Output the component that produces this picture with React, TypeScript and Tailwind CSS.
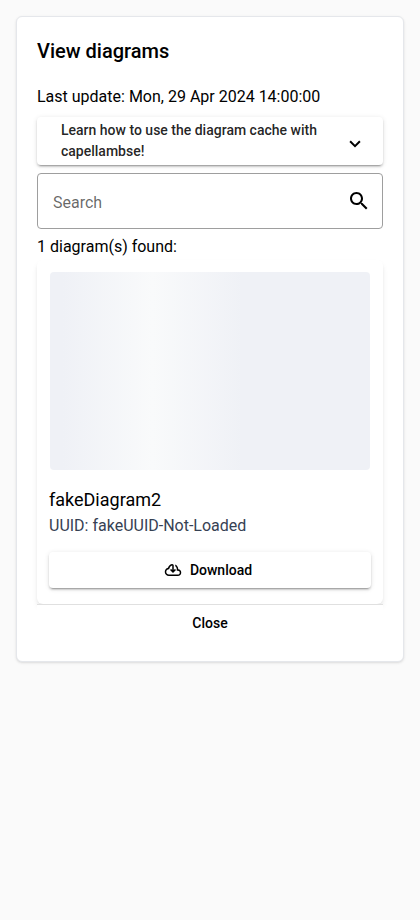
const raised =
  "shadow-[0_3px_1px_-2px_rgba(0,0,0,0.2),0_2px_2px_0_rgba(0,0,0,0.14),0_1px_5px_0_rgba(0,0,0,0.12)]";

function SearchIcon() {
  return (
    <svg className="size-6 shrink-0" viewBox="0 0 24 24" fill="currentColor" aria-hidden="true">
      <path d="M15.5 14h-.79l-.28-.27C15.41 12.59 16 11.11 16 9.5 16 5.91 13.09 3 9.5 3S3 5.91 3 9.5 5.91 16 9.5 16c1.61 0 3.09-.59 4.23-1.57l.27.28v.79l5 4.99L20.49 19l-4.99-5zm-6 0C7.01 14 5 11.99 5 9.5S7.01 5 9.5 5 14 7.01 14 9.5 11.99 14 9.5 14z" />
    </svg>
  );
}

function CloudDownloadIcon() {
  return (
    <svg className="size-[18px] shrink-0" viewBox="0 -960 960 960" fill="currentColor" aria-hidden="true">
      <path d="M260-160q-91 0-155.500-63T40-377q0-78 47-139t123-78q17-72 85-137t145-65q33 0 56.500 23.500T520-716v242l64-62 56 56-160 160-160-160 56-56 64 62v-242q-76 14-118 73.500T280-520h-20q-58 0-99 41t-41 99q0 58 41 99t99 41h480q42 0 71-29t29-71q0-42-29-71t-71-29h-60v-80q0-48-22-89.500T600-680v-93q74 35 117 103.500T760-520q69 8 114.500 59.500T920-340q0 75-52.500 127.500T740-160H260Z" />
    </svg>
  );
}

function ChevronIcon() {
  return (
    <svg className="h-2 w-3 shrink-0" viewBox="0 0 12 8" fill="none" stroke="currentColor" strokeWidth="2" aria-hidden="true">
      <path d="M1.100 1.200 6 6.100l4.900-4.900" />
    </svg>
  );
}

export default function App() {
  return (
    <div className="min-h-screen bg-[#fafafa] p-4 font-[Roboto,'Liberation_Sans',sans-serif] text-base text-black">
      <main className="rounded-md border border-gray-200 bg-white p-5 shadow-sm">
        <h1 className="text-xl font-medium">View diagrams</h1>
        <p className="mt-5">Last update: Mon, 29 Apr 2024 14:00:00</p>

        <button
          type="button"
          aria-expanded="false"
          className={`mt-2 flex h-12 w-full items-center gap-4 rounded bg-white pr-[22px] pl-6 text-left text-sm/[21px] font-medium text-black/87 ${raised}`}
        >
          <span className="flex-1">Learn how to use the diagram cache with capellambse!</span>
          <span className="pt-1.5 text-black">
            <ChevronIcon />
          </span>
        </button>

        <label className="mt-2 flex h-14 items-center rounded border border-[#9e9e9e] pr-[11px] pl-[15px]">
          <input
            type="search"
            aria-label="Search"
            placeholder="Search"
            className="min-w-0 flex-1 pt-1 outline-none placeholder:text-black/60"
          />
          <SearchIcon />
        </label>

        <p className="mt-1.5">1 diagram(s) found:</p>

        <article className="mt-px rounded-md bg-white px-3 pt-3 pb-4 shadow-md">
          <div className="mx-px h-[198px] rounded bg-[linear-gradient(90deg,#eff1f6_4%,#f9fafb_32%,#eff1f6_60%)]" />
          <h2 className="mt-4 text-lg/7">fakeDiagram2</h2>
          <p className="text-gray-700">UUID: fakeUUID-Not-Loaded</p>
          <button
            type="button"
            className={`mt-3.5 flex h-9 w-full items-center justify-center gap-2 rounded bg-white pr-1 text-sm font-medium ${raised}`}
          >
            <CloudDownloadIcon />
            Download
          </button>
        </article>

        <footer className="relative flex justify-center border-t border-[#e0e0e0] bg-white">
          <button type="button" className="h-9 px-3 text-sm font-medium">
            Close
          </button>
        </footer>
      </main>
    </div>
  );
}
